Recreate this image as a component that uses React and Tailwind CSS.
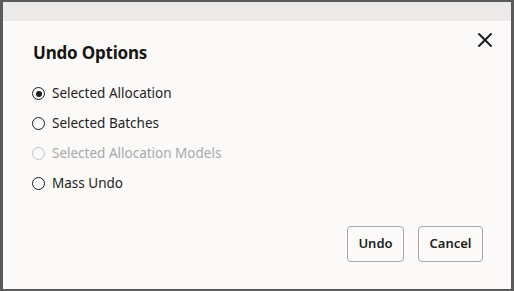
import { X } from "lucide-react";

const options = [
  { label: "Selected Allocation", checked: true },
  { label: "Selected Batches" },
  { label: "Selected Allocation Models", disabled: true },
  { label: "Mass Undo" },
];

function Radio({ checked, disabled }) {
  const ring = disabled ? "border-[#c4c4c4]" : "border-[#1d1d1d]";
  return (
    <span className={`flex h-[13px] w-[13px] items-center justify-center rounded-full border-[1.5px] ${ring}`}>
      {checked && <span className="h-[6px] w-[6px] rounded-full bg-[#1d1d1d]" />}
    </span>
  );
}

export default function App() {
  return (
    <div className="h-[291px] w-[514px] overflow-hidden border-x-[3px] border-y-2 border-[#5a5a5a] bg-[#fbfaf8] font-['Noto_Sans',sans-serif] text-[#1d1d1d]">
      <div className="h-[19px] bg-[#ebeae8]" />
      <div className="flex items-start justify-between pl-[30px] pr-[14px] pt-[7px]">
        <h1 className="mt-[13px] text-[17px] font-bold leading-[24px] tracking-[-0.2px] text-[#161513]">Undo Options</h1>
        <X className="h-[24px] w-[24px]" strokeWidth={2} />
      </div>
      <div className="mt-[17px] flex flex-col gap-[7px] pl-[29px]">
        {options.map((o) => (
          <label key={o.label} className="flex h-[23px] items-center gap-[7px]">
            <Radio checked={o.checked} disabled={o.disabled} />
            <span className={`text-[13.5px] ${o.disabled ? "text-[#a9a9a9]" : "text-[#1d1d1d]"}`}>{o.label}</span>
          </label>
        ))}
      </div>
      <div className="mt-[31px] flex justify-end gap-[14px] pr-[28px]">
        <button className="h-[36px] w-[57px] rounded-[4px] border border-[#a8a8a8] bg-[#fbfaf8] text-[13px] font-semibold">Undo</button>
        <button className="h-[36px] w-[65px] rounded-[4px] border border-[#a8a8a8] bg-[#fbfaf8] text-[13px] font-semibold">Cancel</button>
      </div>
    </div>
  );
}
